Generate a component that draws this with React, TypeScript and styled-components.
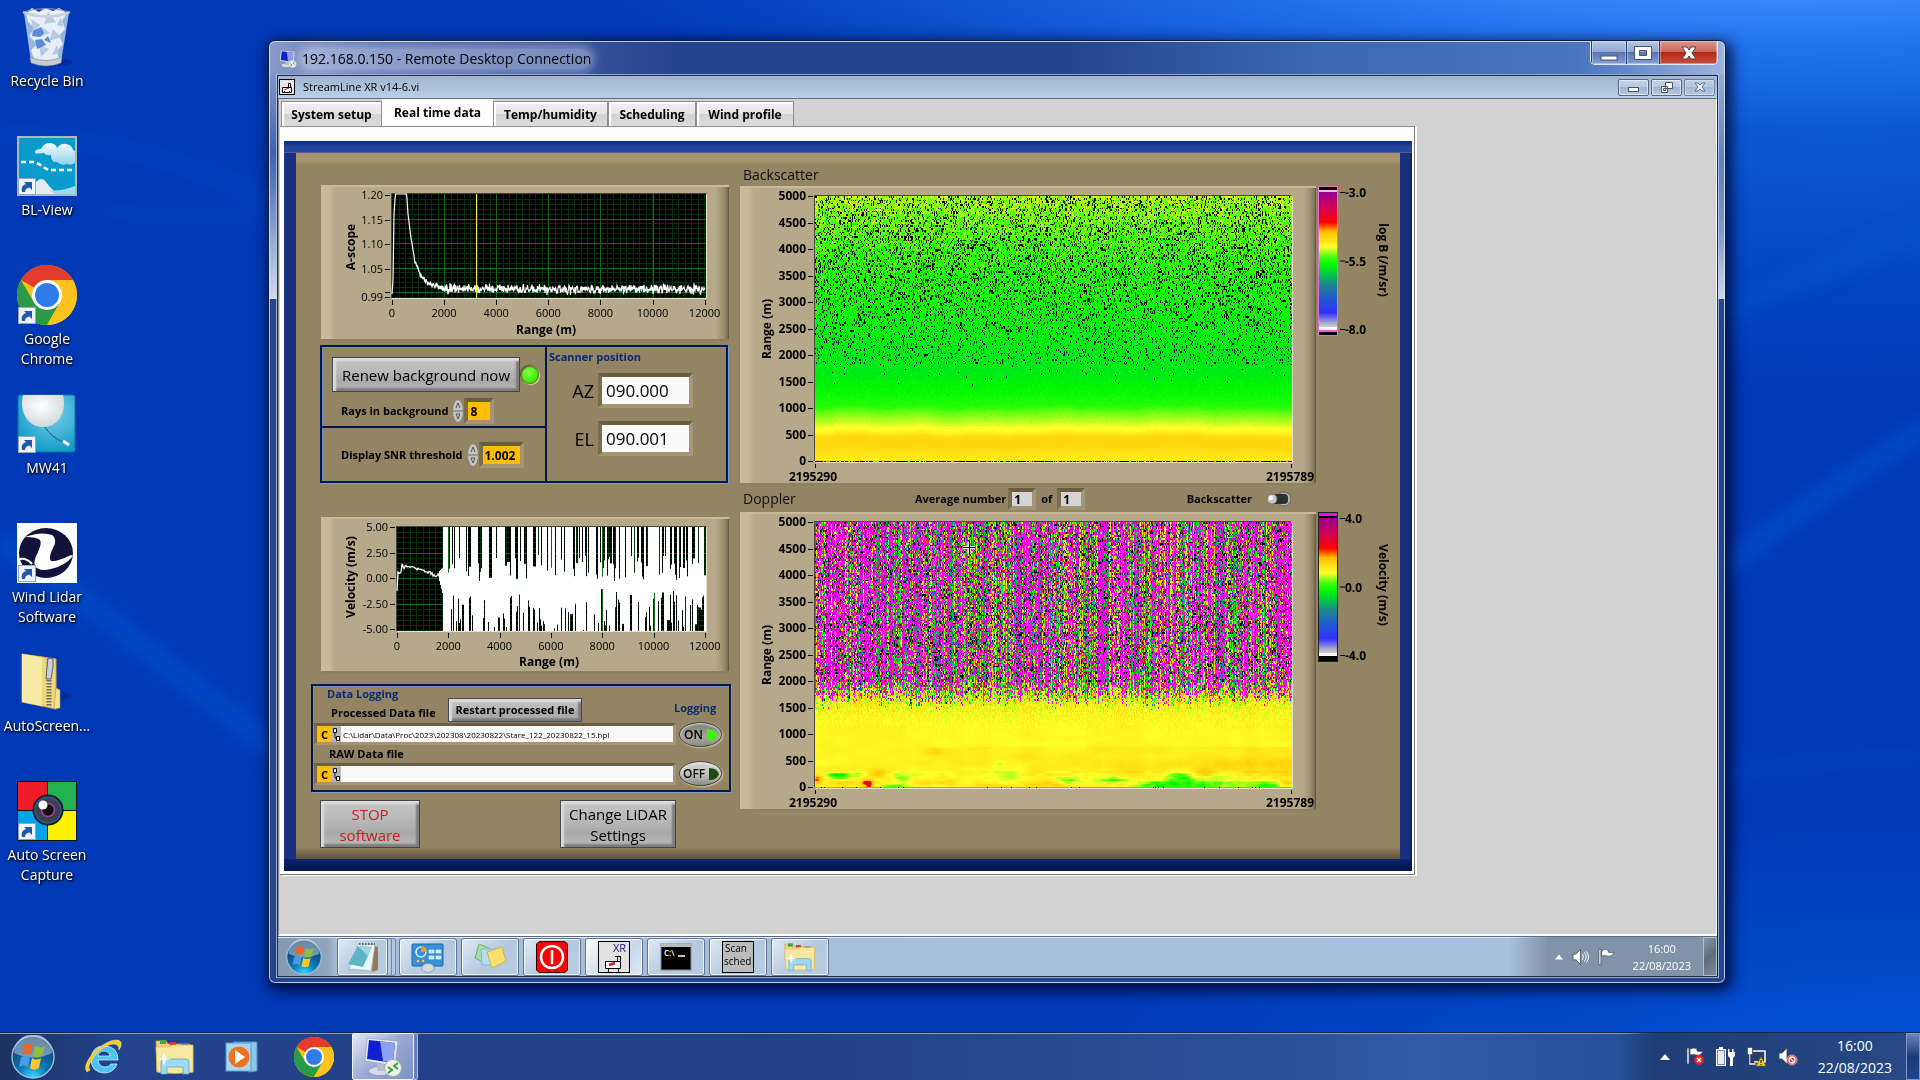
import React, { useEffect, useRef } from "react";
import styled, { createGlobalStyle, css } from "styled-components";

const GlobalStyle = createGlobalStyle`
  *, *::before, *::after { box-sizing: border-box; }
  html, body, #root { height: 100%; }
  body { margin: 0; overflow: hidden; font-family: "Open Sans", "Noto Sans", sans-serif; background: #0039b6; }
  button, input { font: inherit; color: inherit; margin: 0; padding: 0; border: 0; border-radius: 0; }
  button { background: none; cursor: default; }
  svg, canvas { display: block; }
`;

/* ---------- helpers ---------- */

function makeRandom(seed: number) {
  let s = seed >>> 0;
  return () => {
    s = (s + 0x6d2b79f5) >>> 0;
    let t = s;
    t = Math.imul(t ^ (t >>> 15), t | 1);
    t ^= t + Math.imul(t ^ (t >>> 7), t | 61);
    return ((t ^ (t >>> 14)) >>> 0) / 4294967296;
  };
}

type Rgb = [number, number, number];

const STOPS: [number, Rgb][] = [
  [0, [225, 225, 230]],
  [0.03, [190, 190, 200]],
  [0.12, [48, 48, 255]],
  [0.2, [35, 80, 220]],
  [0.32, [30, 130, 150]],
  [0.4, [0, 200, 70]],
  [0.47, [0, 250, 0]],
  [0.52, [60, 255, 10]],
  [0.6, [255, 255, 40]],
  [0.71, [255, 190, 0]],
  [0.78, [255, 0, 0]],
  [0.88, [215, 0, 80]],
  [1, [150, 0, 150]],
];

function ramp(v: number): Rgb {
  if (v <= 0) return [0, 0, 0];
  if (v >= 1) return [245, 0, 235];
  for (let i = 1; i < STOPS.length; i++) {
    if (v <= STOPS[i][0]) {
      const [a, ca] = STOPS[i - 1];
      const [b, cb] = STOPS[i];
      const t = (v - a) / (b - a);
      return [0, 1, 2].map((k) => ca[k] + (cb[k] - ca[k]) * t) as Rgb;
    }
  }
  return [150, 0, 150];
}

function interp(points: [number, number][], x: number) {
  for (let i = 1; i < points.length; i++) {
    if (x <= points[i][0]) {
      const [a, va] = points[i - 1];
      const [b, vb] = points[i];
      return va + ((x - a) / (b - a)) * (vb - va);
    }
  }
  return points[points.length - 1][1];
}

function smoothNoise(seed: number, sx: number, sy: number) {
  const r = makeRandom(seed);
  const g = Array.from({ length: 64 * 64 }, () => r() * 2 - 1);
  return (x: number, y: number) => {
    const fx = x / sx;
    const fy = y / sy;
    const ix = Math.floor(fx);
    const iy = Math.floor(fy);
    const u = (fx - ix) * (fx - ix) * (3 - 2 * (fx - ix));
    const w = (fy - iy) * (fy - iy) * (3 - 2 * (fy - iy));
    const at = (a: number, b: number) => g[(b & 63) * 64 + (a & 63)];
    return (
      (at(ix, iy) * (1 - u) + at(ix + 1, iy) * u) * (1 - w) +
      (at(ix, iy + 1) * (1 - u) + at(ix + 1, iy + 1) * u) * w
    );
  };
}

/* ---------- heat maps ---------- */

const MAP_W = 477;
const MAP_H = 266;

type Sampler = (x: number, metres: number, py: number) => number;

function backscatterField(): Sampler {
  const r = makeRandom(7);
  const wave = smoothNoise(3, 34, 400);
  const fine = smoothNoise(5, 12, 400);
  const profile: [number, number][] = [
    [0, 0.63], [150, 0.645], [300, 0.668], [470, 0.667], [520, 0.645], [580, 0.615],
    [660, 0.598], [730, 0.58], [850, 0.555], [980, 0.53], [1060, 0.5], [1300, 0.478],
    [1500, 0.462], [1700, 0.448], [2000, 0.446], [2600, 0.466], [3200, 0.487],
    [4000, 0.51], [4400, 0.53], [5000, 0.562],
  ];
  const noise: [number, number][] = [[0, 0.002], [1000, 0.005], [1500, 0.013], [2500, 0.028], [4000, 0.042], [5000, 0.042]];
  const drop: [number, number][] = [[0, 0], [1400, 0], [1500, 0.004], [1830, 0.015], [1850, 0.09], [2400, 0.13], [3000, 0.2], [4000, 0.22], [5000, 0.17]];
  return (x, m) => {
    if (m < 12) return r() < 0.7 ? 0 : 0.5;
    if (r() < interp(drop, m)) return 0;
    const shift = m < 1100 ? wave(x, 0) * 28 + fine(x, 0) * 12 : 0;
    return interp(profile, Math.max(0, m + shift)) + (r() - 0.5) * 2 * interp(noise, m);
  };
}

const BLOBS: [number, number, number, number, number][] = [
  [23, 253, 11, 3, -0.15], [42, 252, 10, 3, -0.06], [52, 261, 5, 4, 0.22], [2, 256, 4, 4, 0.13],
  [62, 250, 9, 4, 0.06], [88, 254, 9, 6, -0.05], [80, 264, 13, 2, -0.14], [122, 259, 20, 3, 0.05],
  [118, 229, 13, 4, 0.04], [190, 252, 16, 5, -0.035], [206, 246, 7, 4, -0.04], [184, 241, 5, 3, -0.03],
  [180, 263, 26, 2, 0.04], [232, 262, 22, 3, 0.06], [254, 258, 12, 4, -0.08], [302, 257, 18, 3, -0.08],
  [352, 262, 30, 4, -0.12], [366, 254, 13, 5, -0.11], [392, 261, 24, 4, -0.08], [410, 254, 14, 3, -0.05],
  [446, 262, 28, 4, -0.1], [388, 250, 8, 3, 0.08], [472, 261, 7, 3, 0.1], [440, 242, 70, 10, 0.035],
  [300, 242, 80, 9, 0.022], [170, 234, 60, 12, 0.015], [30, 260, 20, 3, 0.05],
];

function dopplerField(): Sampler {
  const r = makeRandom(21);
  const c = makeRandom(4);
  const cols = Array.from({ length: MAP_W }, () => ({ hot: c(), edge: c(), tint: c(), mean: 0.36 + c() * 0.3 }));
  const band = smoothNoise(8, 14, 500);
  const cloud = smoothNoise(12, 26, 6);
  const fine = smoothNoise(14, 9, 3);
  return (x, m, py) => {
    if (m < 12) return r() < 0.04 ? 0 : 0.5;
    const col = cols[x];
    const edge = 1640 + col.edge * 220 + band(x, 0) * 60;
    const chaos = Math.min(1, Math.max(0, (m - edge + 160) / 360));
    if (r() < chaos) {
      const hot = (m > 2000 ? 0.42 : 0.34) + (col.hot - 0.5) * 1.05 + band(x, 3) * 0.2;
      const dark = m > 2000 ? 0.14 : 0.04;
      if (r() < dark) return 0;
      if (r() < hot) return 1.1;
      const p = r();
      if (p < 0.12) return 0.78 + r() * 0.21;
      if (p < 0.72) return col.mean + (r() - 0.5) * 0.16;
      if (p < 0.84) return 1.1;
      return 0.05 + r() * 0.7;
    }
    let v = 0.615 + band(x, 0) * 0.008 + cloud(x, py) * (m < 900 ? 0.015 : 0.006);
    const spread = m > 800 ? Math.min(0.08, ((m - 800) / 1000) ** 2 * 0.09) : 0.003;
    v += (r() - 0.5) * 2 * spread + (col.tint - 0.55) * spread;
    if (m < 320) v += fine(x, py) * 0.02;
    if (m < 800) {
      for (const [bx, by, rx, ry, d] of BLOBS) {
        const q = ((x - bx) / rx) ** 2 + ((py - by) / ry) ** 2;
        if (q < 5) v += d * Math.exp(-q) * (1 + fine(x * 2, py * 2) * 0.35);
      }
      v += (x / MAP_W) * 0.02 * (m / 800);
    }
    return v;
  };
}

const Plot = styled.canvas`
  width: 477px;
  height: 266px;
  box-shadow: -1px -1px 0 #4d4a3a, 1px 1px 0 #e6e4c8;
`;

function HeatCanvas({ field, label }: { field: () => Sampler; label: string }) {
  const ref = useRef<HTMLCanvasElement>(null);
  useEffect(() => {
    const ctx = ref.current?.getContext("2d");
    if (!ctx) return;
    const img = ctx.createImageData(MAP_W, MAP_H);
    const f = field();
    const gates = 167;
    let lastGate = -1;
    let row: Rgb[] = [];
    for (let y = 0; y < MAP_H; y++) {
      const gate = Math.floor((y / MAP_H) * gates);
      if (gate !== lastGate || y === MAP_H - 1) {
        const m = y === MAP_H - 1 ? 0 : 5000 - (y / (MAP_H - 1)) * 5000 + 12;
        row = Array.from({ length: MAP_W }, (_, x) => ramp(f(x, m, y)));
        lastGate = gate;
      }
      for (let x = 0; x < MAP_W; x++) {
        const o = (y * MAP_W + x) * 4;
        img.data[o] = row[x][0];
        img.data[o + 1] = row[x][1];
        img.data[o + 2] = row[x][2];
        img.data[o + 3] = 255;
      }
    }
    ctx.putImageData(img, 0, 0);
  }, [field]);
  return <Plot ref={ref} width={MAP_W} height={MAP_H} role="img" aria-label={label} />;
}

const bevel = css`
  background:
    linear-gradient(90deg, #c9bd9d, #c6b998 9px, rgba(198, 185, 152, 0) 14px),
    linear-gradient(270deg, #5b5340 0, #85795c 2px, #9c9070 6px, rgba(156, 144, 112, 0) 13px),
    #b6a98b;
  border-top: 2px solid #c8bb99;
  border-bottom: 2px solid #8d8060;
`;

const HeatPanel = styled.div`
  ${bevel}
  display: grid;
  grid-template-columns: 34px 41px 477px 24px;
  grid-template-rows: 8px 266px 21px;
  width: 576px;
  height: 299px;
`;

const AxisTitle = styled.span`
  grid-row: 2;
  grid-column: 1;
  writing-mode: vertical-rl;
  transform: rotate(180deg);
  place-self: center end;
  font-size: 12px;
  line-height: 14px;
  font-weight: 700;
  color: #000;
`;

const AxisSvg = styled.svg`
  grid-row: 1 / 3;
  grid-column: 2;
  overflow: visible;
`;

const PlotCell = styled.div`
  grid-row: 2;
  grid-column: 3;
  display: grid;
  > * {
    grid-area: 1 / 1;
  }
`;

const Feet = styled.div`
  grid-row: 3;
  grid-column: 1 / 5;
  display: flex;
  justify-content: space-between;
  align-items: flex-end;
  padding: 0 2px 0 49px;
  font-size: 12px;
  line-height: 12px;
  font-weight: 700;
  background: linear-gradient(#000, #000) 75px 2px / 1px 4px no-repeat, linear-gradient(#000, #000) 551px 2px / 1px 4px no-repeat;
`;

function HeatChart({ field, label, cursor }: { field: () => Sampler; label: string; cursor?: boolean }) {
  return (
    <HeatPanel>
      <AxisTitle>Range (m)</AxisTitle>
      <AxisSvg width="41" height="274">
        {Array.from({ length: 11 }, (_, i) => {
          const y = 8 + i * 26.5;
          return (
            <g key={i}>
              <text x="32" y={y + 4} textAnchor="end" fontSize="12" fontWeight="700">{5000 - i * 500}</text>
              <path d={`M34 ${Math.round(y) + 0.5}h5`} stroke="#000" />
            </g>
          );
        })}
      </AxisSvg>
      <PlotCell>
        <HeatCanvas field={field} label={label} />
        {cursor && (
          <svg width="477" height="266">
            <path d="M148 25.500h12M154 19.500v12" stroke="#fff" strokeWidth="3" />
            <path d="M148 25.500h12M154.500 19v13" stroke="#000" strokeWidth="1" />
          </svg>
        )}
      </PlotCell>
      <Feet><span>2195290</span><span>2195789</span></Feet>
    </HeatPanel>
  );
}

const ScaleSvg = styled.svg`
  overflow: visible;
`;

function ColourScale({ title, id, marks, over, under, frame, titleY }: {
  title: string; id: string; marks: string[]; over: string; under: string; frame: string; titleY: number;
}) {
  return (
    <ScaleSvg width="80" height="152" viewBox="0 0 80 152" fontSize="12" fontWeight="700">
      <defs>
        <linearGradient id={id} x1="0" y1="0" x2="0" y2="1">
          {[...STOPS].reverse().map(([p, c]) => (
            <stop key={p} offset={1 - p} stopColor={`rgb(${c.join(",")})`} />
          ))}
        </linearGradient>
      </defs>
      <rect x="0.5" y="0.5" width="19" height="149" fill={under} stroke={frame} />
      <rect x="1" y="1" width="18" height="3" fill={over} />
      <rect x="1" y="4" width="18" height="2" fill={over === "#000" ? "#f2b6ee" : "#000"} />
      <rect x="1" y="6" width="18" height="137" fill={`url(#${id})`} />
      <rect x="1" y="141" width="18" height="3" fill="#fff" />
      {over === "#000" && <rect x="1" y="144" width="18" height="2" fill="#e860d8" />}
      {marks.map((m, i) => (
        <g key={m}>
          <path d={`M22 ${6.5 + i * 68.5}h5`} stroke="#000" />
          <text x="27" y={11 + i * 68.5}>{m}</text>
        </g>
      ))}
      <text transform={`translate(61 ${titleY}) rotate(90)`} textAnchor="middle">{title}</text>
    </ScaleSvg>
  );
}

/* ---------- line plots ---------- */

const LinePanel = styled.div`
  ${bevel}
  width: 408px;
  height: 156px;
  margin-left: 10px;
`;

function Grid({ x, y, w, h, dx, dy, majorX, majorY }: {
  x: number; y: number; w: number; h: number; dx: number; dy: number; majorX: number; majorY: number[];
}) {
  const minor: string[] = [];
  for (let gx = dx; gx < w; gx += dx) minor.push(`M${Math.round(x + gx) + 0.5} ${y}v${h}`);
  for (let gy = dy; gy < h; gy += dy) minor.push(`M${x} ${Math.round(y + gy) + 0.5}h${w}`);
  const major: string[] = [];
  for (let i = 1; i < 6; i++) major.push(`M${Math.round(x + i * majorX) + 0.5} ${y}v${h}`);
  majorY.forEach((gy) => major.push(`M${x} ${Math.round(y + gy) + 0.5}h${w}`));
  return (
    <g>
      <rect x={x} y={y} width={w} height={h} fill="#000" />
      <path d={minor.join("")} stroke="#04300a" strokeWidth="1" />
      <path d={major.join("")} stroke="#126a18" strokeWidth="1" />
      <path d={`M${x - 0.5} ${y + h}v${-h - 0.5}h${w + 1}`} stroke="#4a4636" fill="none" />
      <path d={`M${x} ${y + h + 0.5}h${w + 0.5}v${-h}`} stroke="#e8e2ce" fill="none" />
    </g>
  );
}

function XTicks({ x, step, y }: { x: number; step: number; y: number }) {
  return (
    <g>
      {[0, 1, 2, 3, 4, 5, 6].map((i) => (
        <g key={i}>
          <path d={`M${Math.round(x + i * step) + 0.5} ${y}v5`} stroke="#000" />
          <text x={x + i * step} y={y + 17} textAnchor="middle">{i * 2000}</text>
        </g>
      ))}
    </g>
  );
}

function ScopeChart() {
  const r = makeRandom(31);
  const pts: string[] = [];
  for (let i = 0; i <= 626; i++) {
    const px = i / 2;
    const decay = interp([
      [0, 100], [1, 86], [2, 20], [4, -10], [14, -10], [16, 20], [19, 44], [23, 68], [29, 82], [34, 88], [42, 92], [50, 95], [314, 95],
    ], px);
    const amp = px < 20 ? 0 : px < 42 ? 3 : 6;
    const jitter = (r() + r() - 1) * amp;
    pts.push(`${71 + px} ${Math.max(7, Math.min(110, 7 + decay + jitter))}`);
  }
  const labels: [string, number][] = [["1.20", 8], ["1.15", 33], ["1.10", 57], ["1.05", 82], ["0.99", 110]];
  return (
    <LinePanel>
      <svg width="408" height="152" fontSize="11" role="img" aria-label="A-scope">
        <Grid x={71} y={7} w={314} h={104} dx={6.5} dy={4.9} majorX={52.1} majorY={[25, 49, 74, 98]} />
        <path d={`M${pts.join("L")}`} fill="none" stroke="#fff" strokeWidth="1.2" />
        <path d="M155.5 7v104" stroke="#f4f43c" />
        {labels.map(([t, y]) => (
          <g key={t}>
            <text x="62" y={y + 4} textAnchor="end">{t}</text>
            <path d={`M64 ${y + 0.5}h5`} stroke="#000" />
          </g>
        ))}
        <path d="M64 105.5h5" stroke="#000" />
        <XTicks x={71} step={52.1} y={113} />
        <text x="225" y="147" textAnchor="middle" fontWeight="700" fontSize="12">Range (m)</text>
        <text transform="translate(34 60) rotate(-90)" textAnchor="middle" fontWeight="700" fontSize="12">A-scope</text>
      </svg>
    </LinePanel>
  );
}

function VelocityChart() {
  const r = makeRandom(77);
  const x0 = 76;
  const y0 = 8;
  const line: string[] = [];
  for (let i = 0; i <= 46; i++) {
    const v = interp([[0, 64], [1, 46], [4, 46], [5, 36], [7, 41], [9, 39], [14, 40], [30, 45], [46, 52]], i);
    line.push(`${x0 + i} ${y0 + v + (r() - 0.5) * (i > 28 ? 7 : 2)}`);
  }
  const bars: string[] = [];
  let top = 0;
  let bottom = 104;
  for (let i = 42; i < 309; i++) {
    if (r() < 0.9) top = r() < 0.62 ? 0 : 28 + r() * 26;
    if (r() < 0.9) bottom = r() < 0.62 ? 104 : 62 + r() * 42;
    const t = i < 46 ? 44 - (i - 42) : top;
    const b = i < 46 ? 54 + (i - 42) * 4 : bottom;
    bars.push(`M${x0 + i + 0.5} ${y0 + t}V${y0 + b}`);
  }
  return (
    <LinePanel>
      <svg width="408" height="152" fontSize="11" role="img" aria-label="Velocity">
        <Grid x={x0} y={y0} w={309} h={104} dx={6.4} dy={5.15} majorX={51.3} majorY={[26, 51, 77]} />
        <path d={bars.join("")} stroke="#fff" strokeWidth="1" />
        <path d={`M${line.join("L")}`} fill="none" stroke="#fff" strokeWidth="1.3" />
        {["5.00", "2.50", "0.00", "-2.50", "-5.00"].map((t, i) => (
          <g key={t}>
            <text x="67" y={12 + i * 25.6} textAnchor="end">{t}</text>
            <path d={`M69 ${Math.round(8 + i * 25.6) + 0.5}h5`} stroke="#000" />
          </g>
        ))}
        <XTicks x={x0} step={51.3} y={114} />
        <text x="228" y="147" textAnchor="middle" fontWeight="700" fontSize="12">Range (m)</text>
        <text transform="translate(34 58) rotate(-90)" textAnchor="middle" fontWeight="700" fontSize="12">Velocity (m/s)</text>
      </svg>
    </LinePanel>
  );
}

/* ---------- icons ---------- */

const Shortcut = () => (
  <g transform="translate(1 42)">
    <rect x="0.5" y="0.5" width="17" height="16" fill="#eef3fa" stroke="#9aa6b8" />
    <path d="M4 14c-1-5 1-7 4-8L6 4h8v8l-2.500-2.500C9 10 7 11 7 14z" fill="#2457a5" />
  </g>
);

const BinIcon = () => (
  <svg width="60" height="60" viewBox="0 0 60 60">
    <ellipse cx="36" cy="55" rx="20" ry="4" fill="#001f80" opacity=".5" />
    <path d="M7 6l7 49q16 7 30 0l8-49z" fill="#a9c4e4" opacity=".9" />
    <path d="M9 6l6-5 7 4 6-4 8 3 6-3 8 5-5 8 3 8-6 7 4 8-6 7 2 8q-14 4-25 0l-3-9 6-6-8-8 6-8-7-6z" fill="#e6eef8" />
    <path d="M14 12l9 6-6 8zM31 5l8 10-12 2zM36 22l8 8-12 4zM22 38l10 4-8 8zM40 38l-5 10 7-2zM25 20l8 6-10 4zM44 10l-4 8 6 2z" fill="#b5c9e2" />
    <path d="M16 24l8-4 3 6-4 4-8-1zM18 33l7-1 4 6-9 4zM27 33l4-4 3 7z" fill="#3f7bd3" opacity=".85" />
    <path d="M6 5q24 9 47 0" fill="none" stroke="#c9d0da" strokeWidth="2.500" />
    <path d="M6 5q23-7 47 0" fill="none" stroke="#8d98a8" strokeWidth="1" />
    <path d="M13 50q16 7 32 0l-1 6q-15 6-30 0z" fill="#c7ccd4" stroke="#777f8b" strokeWidth=".6" />
  </svg>
);

const BlViewIcon = () => (
  <svg width="60" height="60" viewBox="0 0 60 60">
    <defs>
      <linearGradient id="cloud" x1="0" y1="0" x2="0" y2="1">
        <stop offset="0" stopColor="#f2fafc" />
        <stop offset="1" stopColor="#8ed3e8" />
      </linearGradient>
    </defs>
    <rect width="60" height="60" fill="#a9b9c4" />
    <rect x="2" y="2" width="56" height="56" fill="#089bcb" />
    <path d="M18 18q-1-5 6-5 3-7 10-6 5 1 6 5 4-5 9-4 6 1 7 6l2 1v12q-4 3-8 1-6 2-10-2-6 1-6-7-5 1-7-2-8 1-9 0z" fill="url(#cloud)" />
    <path d="M4 26h12q6 1 10 5l6 3h26" fill="none" stroke="#fff" strokeWidth="2.600" strokeDasharray="5 3" />
    <path d="M19 58V46q6-6 10 0 6 9 14 12z" fill="#e5eaec" />
    <path d="M32 54q10 2 26-4v8H38z" fill="#9bdcf0" />
    <Shortcut />
  </svg>
);

const ChromeIcon = ({ size = 60, shortcut }: { size?: number; shortcut?: boolean }) => (
  <svg width={size} height={size} viewBox="0 0 60 60">
    <circle cx="30" cy="30" r="30" fill="#fbc116" />
    <path d="M30 30L4 15A30 30 0 0 1 56 15H30z" fill="#e33b2e" />
    <path d="M4 15A30 30 0 0 0 30 60L43 37.500 17 37.500z" fill="#2a9a48" />
    <path d="M30 15H56A30 30 0 0 1 30 60L43 37.500A15 15 0 0 0 30 15z" fill="#fcc31e" />
    <circle cx="30" cy="30" r="15" fill="#fff" />
    <circle cx="30" cy="30" r="12" fill="#2f7bea" />
    {shortcut && <Shortcut />}
  </svg>
);

const BalloonIcon = () => (
  <svg width="60" height="60" viewBox="0 0 60 60">
    <defs>
      <radialGradient id="sky" cx=".6" cy=".3" r=".8">
        <stop offset="0" stopColor="#7fd0e8" />
        <stop offset="1" stopColor="#0596c6" />
      </radialGradient>
      <radialGradient id="ball" cx=".45" cy=".35" r=".7">
        <stop offset="0" stopColor="#fff" />
        <stop offset="1" stopColor="#cdd4d8" />
      </radialGradient>
    </defs>
    <rect x="1" y="1" width="57" height="57" rx="2" fill="url(#sky)" stroke="#07749c" />
    <path d="M6 1h40c4 16-4 32-20 32S2 17 6 1z" fill="url(#ball)" />
    <path d="M28 33q6 10 18 15" fill="none" stroke="#24566a" strokeWidth="1" />
    <path d="M46 47l6 4" stroke="#fff" strokeWidth="3" />
    <Shortcut />
  </svg>
);

const WindLidarIcon = () => (
  <svg width="60" height="60" viewBox="0 0 60 60">
    <rect width="60" height="60" fill="#fff" />
    <ellipse cx="29" cy="30" rx="27" ry="25" fill="#12123a" />
    <path d="M8 14q16-6 27-2 6 4 1 13-5 10-2 13 6 1 20-6l2 1q-8 10-22 13-12 3-16-3-2-5 3-14 4-9 2-12-3-3-15-3z" fill="#fff" />
    <path d="M3 36q7-1 12 5" stroke="#fff" strokeWidth="2" fill="none" />
    <Shortcut />
  </svg>
);

const ZipIcon = () => (
  <svg width="60" height="60" viewBox="0 0 60 60">
    <path d="M40 52l16-8-14-6z" fill="#002a8c" opacity=".5" />
    <path d="M5 2l34 5v50L5 50z" fill="#efd77a" stroke="#c7a648" />
    <path d="M5 2l20 3v49L5 50z" fill="#f8e9a6" />
    <path d="M39 36l4 2v18l-6 1z" fill="#f3e39c" stroke="#b99a3e" strokeWidth=".6" />
    <path d="M32 7v48" stroke="#6a6f78" strokeWidth="5" strokeDasharray="1.500 1.500" />
    <path d="M31 6l5 1v8l-2 12h-5l1-12z" fill="#c9ced6" stroke="#5d6570" />
  </svg>
);

const CaptureIcon = () => (
  <svg width="60" height="60" viewBox="0 0 60 60">
    <rect width="60" height="60" fill="#111" />
    <rect x="1" y="1" width="29" height="28" fill="#ee1c25" />
    <rect x="31" y="1" width="28" height="28" fill="#22b14c" />
    <rect x="1" y="30" width="29" height="29" fill="#00a2e8" />
    <rect x="31" y="30" width="28" height="29" fill="#fff200" />
    <circle cx="31" cy="29" r="15.500" fill="#16181e" />
    <circle cx="31" cy="29" r="13" fill="#3c4148" stroke="#2a5aa0" strokeWidth="1.500" />
    <circle cx="31" cy="29" r="6.500" fill="#111" stroke="#a040b0" strokeWidth="1.500" />
    <circle cx="26" cy="24" r="4.500" fill="#fff" />
    <Shortcut />
  </svg>
);

const OrbIcon = ({ size, id }: { size: number; id: string }) => (
  <svg width={size} height={size} viewBox="0 0 44 44">
    <defs>
      <radialGradient id={id} cx=".5" cy="1" r=".9">
        <stop offset="0" stopColor="#35e0ff" />
        <stop offset=".4" stopColor="#0a78b8" />
        <stop offset="1" stopColor="#123a66" />
      </radialGradient>
    </defs>
    <circle cx="22" cy="22" r="21" fill={`url(#${id})`} stroke="#9fbcd8" strokeWidth="1.400" />
    <path d="M3 18a19 19 0 0 1 38 0q-19 9-38 0z" fill="#dcebf5" opacity=".45" />
    <path d="M13 10q5-3 9 0l-2 10q-4-3-9 0z" fill="#e9662a" />
    <path d="M24 11q5 3 10 0l-3 10q-5 3-9 0z" fill="#90bf3b" />
    <path d="M10 22q5-3 9 0l-2 10q-4-3-9 0z" fill="#4a9be0" />
    <path d="M21 23q4 3 9 0l-2 10q-5 3-9 0z" fill="#fcc52e" />
  </svg>
);

const IeIcon = () => (
  <svg width="40" height="38" viewBox="0 0 40 38">
    <path d="M34 22H14q1 7 7 7 4 0 6-3h6q-3 9-13 9Q7 34 7 21 8 8 20 8q14 0 14 14zM14 18h12q-1-5-6-5t-6 5z" fill="#4cc4f4" stroke="#cdeefc" strokeWidth=".8" />
    <path d="M3 34Q-2 28 10 14 24 1 34 2q6 2 1 10 0-6-5-6-8 0-17 9Q2 28 6 32z" fill="#f7c92c" stroke="#fff0a0" strokeWidth=".5" />
  </svg>
);

const FolderIcon = ({ w = 40, h = 38 }: { w?: number; h?: number }) => (
  <svg width={w} height={h} viewBox="0 0 40 38">
    <path d="M1 3h10l2 3h20l5 2v26H2z" fill="#efd27a" stroke="#c9a545" strokeWidth=".8" />
    <path d="M5 2h6v4H5z" fill="#3da24a" />
    <path d="M15 4h6v3h-6z" fill="#c8412d" />
    <path d="M26 6h7v3h-7z" fill="#3b82cf" />
    <path d="M1 9h14l3-2h20v27q-18 3-36 0z" fill="#f8e7a0" stroke="#d4b558" strokeWidth=".6" />
    <path d="M6 36V24q0-3 3-3h22q3 0 3 3v12h-6v-7H12v7z" fill="#9fd8f0" stroke="#5aa9d0" strokeWidth=".8" />
    <path d="M9 14l2 6 6 1-6 1-2 6-2-6-5-1 5-1z" fill="#fff" opacity=".8" />
  </svg>
);

const PlayerIcon = () => (
  <svg width="34" height="34" viewBox="0 0 34 34">
    <path d="M8 2h24v29l-8 1z" fill="#8cc8e8" stroke="#4a93c4" />
    <rect x="1" y="3" width="25" height="28" fill="#a9d6ee" stroke="#5d9cc8" />
    <circle cx="14" cy="17" r="10.500" fill="#f0701e" />
    <path d="M10 10l10 7-10 7z" fill="#fff" />
  </svg>
);

const RdpIcon = ({ size = 40 }: { size?: number }) => (
  <svg width={size} height={size} viewBox="0 0 40 40">
    <ellipse cx="17" cy="34" rx="11" ry="4" fill="#d8dce4" />
    <path d="M14 26h7v8h-7z" fill="#b7bdc9" />
    <path d="M4 1l31 3-3 25L2 24z" fill="#e4e8f0" stroke="#8d97a8" strokeWidth=".6" />
    <path d="M6 3l26 3-2 20L4 22z" fill="#1020d0" />
    <path d="M17 4l15 2-2 20-10-2z" fill="#8ea0ee" />
    <circle cx="30" cy="31" r="8.500" fill="#eef1ea" stroke="#a9b0a4" />
    <path d="M25 30l4 3-4 3M35 26l-4 3 4 3" fill="none" stroke="#3aa03a" strokeWidth="2" />
  </svg>
);

const NotepadIcon = () => (
  <svg width="32" height="32" viewBox="0 0 32 32">
    <path d="M27 5l4 1v23l-6 2z" fill="#9c7a50" />
    <path d="M11 3l17 1-4 26-22-2z" fill="#eef6fa" stroke="#8aa" strokeWidth=".6" />
    <path d="M11 5l14 1-9 20-15-3z" fill="#5fb4c6" />
    <path d="M11 5l14 1-4 9z" fill="#9fd8e2" />
    <path d="M12 3h16" stroke="#666" strokeWidth="2" strokeDasharray="1.500 1.500" />
  </svg>
);

const ControlIcon = () => (
  <svg width="34" height="32" viewBox="0 0 34 32">
    <rect x="1" y="3" width="31" height="22" rx="1" fill="#3690d8" stroke="#1e66a8" />
    <circle cx="10" cy="11" r="5" fill="none" stroke="#d5ecfa" strokeWidth="1.500" />
    <path d="M10 11V5a6 6 0 0 1 6 6z" fill="#f79a20" />
    <path d="M18 9h5v3h-5zM25 9h5v3h-5zM18 15h5v3h-5zM25 15h5v3h-5z" fill="#bfe6fb" stroke="#fff" strokeWidth=".6" />
    <circle cx="7" cy="20" r="1.300" fill="#f7c560" />
    <circle cx="12" cy="20" r="1.300" fill="#f7c560" />
    <ellipse cx="17" cy="27" rx="6" ry="4.500" fill="#d5d9de" stroke="#8a9098" strokeWidth=".6" />
  </svg>
);

const NotesIcon = () => (
  <svg width="34" height="32" viewBox="0 0 34 32">
    <path d="M6 3l12 5-6 14L2 17z" fill="#a6dfa0" stroke="#6cb86a" />
    <path d="M8 8h15v16H9z" fill="#b6dcf4" stroke="#84b6dc" />
    <path d="M14 11l15-5 4 14-14 7z" fill="#f8e070" stroke="#d8b23c" />
  </svg>
);

const PowerIcon = () => (
  <svg width="32" height="32" viewBox="0 0 32 32">
    <path d="M3 .5h26L31.500 3v26L29 31.500H3L.5 29V3z" fill="#f40606" stroke="#300" />
    <circle cx="16" cy="16" r="11" fill="none" stroke="#fff" strokeWidth="2.500" />
    <path d="M16 9v14" stroke="#fff" strokeWidth="2.500" />
  </svg>
);

const XrIcon = () => (
  <svg width="32" height="32" viewBox="0 0 32 32">
    <rect x=".5" y=".5" width="31" height="31" fill="#e2e2e2" stroke="#000" />
    <text x="15" y="11" fontSize="11" fill="#14148c">XR</text>
    <path d="M7.500 20.500h15v7h-15zM10.500 31v-4M20.500 31v-4M19.500 20v-5M22.500 20v-5M17 15.500h5" fill="#fff" stroke="#000" />
    <path d="M11 24l6-2" stroke="#d01818" strokeWidth="2.500" />
  </svg>
);

const ConsoleIcon = () => (
  <svg width="32" height="28" viewBox="0 0 32 28">
    <rect x="1" y="1" width="30" height="26" fill="#000" stroke="#8a8a8a" />
    <rect x="1" y="1" width="30" height="3" fill="#b8bcc0" />
    <text x="4" y="13" fontSize="8" fontWeight="600" fill="#fff">C:\</text>
    <path d="M18 13h7" stroke="#fff" strokeWidth="1.500" />
  </svg>
);

const ScanIcon = () => (
  <svg width="32" height="32" viewBox="0 0 32 32">
    <rect x=".5" y=".5" width="31" height="31" fill="#bcbcbc" stroke="#000" />
    <text x="3" y="11" fontSize="10">Scan</text>
    <text x="2" y="24" fontSize="10">sched</text>
  </svg>
);

const ViIcon = () => (
  <svg width="16" height="16" viewBox="0 0 16 16">
    <rect x=".5" y=".5" width="15" height="15" fill="#e8e8e8" stroke="#000" />
    <path d="M3.500 8.500h9v5h-9zM9.500 8V4.500h2V8M5.500 14v-2M10.500 14v-2" fill="#fff" stroke="#000" />
    <path d="M5 11l5-2" stroke="#d01818" />
  </svg>
);

const SpeakerShape = () => <path d="M1 6h3l5-5v16l-5-5H1z" fill="#fff" stroke="#3b4656" strokeWidth=".8" />;

const FlagShape = () => (
  <path d="M1 1h2v16H1zM4 2q4-2 7 0v2q3 1 6 0-2 5-7 4-3-1-6 0z" fill="#fff" stroke="#3b4656" strokeWidth=".7" />
);

/* ---------- desktop ---------- */

const Desktop = styled.main`
  position: relative;
  height: 100vh;
  min-height: 720px;
  display: flex;
  flex-direction: column;
  overflow: hidden;
  background:
    radial-gradient(ellipse 62% 15% at 92% -3%, rgba(72, 150, 255, 1), rgba(40, 120, 245, 0.7) 50%, rgba(0, 80, 220, 0) 100%),
    radial-gradient(ellipse 46% 36% at 96% 0%, rgba(20, 110, 240, 0.85), rgba(0, 80, 220, 0) 100%),
    radial-gradient(ellipse 44% 24% at 100% 100%, rgba(4, 90, 225, 0.85), rgba(0, 80, 220, 0) 100%),
    #0039b6;
`;

const Rays = styled.svg`
  position: absolute;
  inset: 0;
  width: 100%;
  height: 100%;
`;

const IconColumn = styled.nav`
  position: relative;
  flex: 1;
  width: 94px;
  padding-top: 7px;
`;

const Shortcutter = styled.button`
  display: flex;
  flex-direction: column;
  align-items: center;
  justify-content: flex-start;
  gap: 4px;
  width: 94px;
  height: 129px;
  color: #fff;
  font-size: 14px;
  line-height: 20px;
  text-align: center;
  text-shadow: 1px 1px 2px #000, 0 1px 3px rgba(0, 0, 0, 0.8);
`;

const SHORTCUTS: [string, React.ReactNode][] = [
  ["Recycle Bin", <BinIcon />],
  ["BL-View", <BlViewIcon />],
  ["Google Chrome", <ChromeIcon shortcut />],
  ["MW41", <BalloonIcon />],
  ["Wind Lidar Software", <WindLidarIcon />],
  ["AutoScreen...", <ZipIcon />],
  ["Auto Screen Capture", <CaptureIcon />],
];

/* ---------- remote window ---------- */

const Window = styled.section`
  position: absolute;
  inset: 40px 194px 96px 268px;
  display: flex;
  flex-direction: column;
  padding: 0 7px 6px 8px;
  border: 1px solid #0b1c40;
  border-radius: 7px;
  background:
    linear-gradient(90deg, rgba(170, 184, 222, 0.75), rgba(120, 140, 196, 0.6) 8%, rgba(37, 67, 141, 0) 28%, rgba(37, 67, 141, 0) 55%, #3c68b2 72%, #4a76c0 90%, #9db3df) 0 0 / 100% 33px no-repeat,
    linear-gradient(#8094c8, #3f63b0 35%, #5a7cbd 50%, #d3daee) 0 33px / 8px 225px no-repeat,
    linear-gradient(#94abd9, #5f80bc 40%, #8098cc 70%, #ccd6ea) 100% 33px / 8px 225px no-repeat,
    #25448e;
  box-shadow: inset 0 0 0 1px rgba(225, 235, 255, 0.8), 3px 4px 14px 3px rgba(0, 0, 30, 0.75);
`;

const TitleBar = styled.header`
  flex: none;
  display: flex;
  justify-content: space-between;
  height: 34px;
`;

const TitleText = styled.h1`
  display: flex;
  align-items: center;
  gap: 5px;
  margin: 0;
  padding: 2px 0 0 2px;
  font-size: 14px;
  font-weight: 400;
  line-height: 20px;
  color: #000;
`;

const Glow = styled.span`
  background: rgba(235, 240, 255, 0.36);
  border-radius: 10px;
  box-shadow: 0 0 8px 4px rgba(235, 240, 255, 0.36);
`;

const Caption = styled.div`
  display: flex;
  height: 24px;
  border: 1px solid #dfe8f8;
  border-top: 0;
  border-radius: 0 0 5px 5px;
  overflow: hidden;
`;

const CaptionButton = styled.button<{ $w: number; $close?: boolean }>`
  display: grid;
  place-items: center;
  width: ${(p) => p.$w}px;
  border-left: 1px solid #2b3f6c;
  background: ${(p) =>
    p.$close
      ? "linear-gradient(#dc9a8e, #cc6455 48%, #b22a16 50%, #c8503c)"
      : "linear-gradient(#b8c8e6, #8fa6d2 48%, #5674b4 50%, #86a0d4)"};
  box-shadow: inset 0 0 0 1px rgba(255, 255, 255, 0.35);
`;

const Screen = styled.div`
  flex: 1;
  min-height: 0;
  display: flex;
  flex-direction: column;
  border: 1px solid #1e2b45;
  box-shadow: 0 0 0 1px rgba(200, 215, 240, 0.7);
  background: #d2d2d2;
`;

const InnerTitle = styled.header`
  flex: none;
  display: flex;
  align-items: center;
  height: 22px;
  padding: 0 2px 0 1px;
  background: linear-gradient(#9fb5cf, #b8d0ea);
`;

const InnerName = styled.h2`
  flex: 1;
  margin: 0 0 0 8px;
  font-size: 11px;
  font-weight: 400;
  line-height: 16px;
`;

const InnerButtons = styled.div`
  display: flex;
  gap: 2px;
`;

const InnerButton = styled.button<{ $faded?: boolean }>`
  display: grid;
  place-items: center;
  width: 31px;
  height: 17px;
  border: 1px solid #56677f;
  border-radius: 2px;
  background: linear-gradient(#c3d4e8, #b4c8de 48%, #9db4d0 50%, #b6cbe3);
  box-shadow: inset 0 0 0 1px rgba(255, 255, 255, 0.5);
  opacity: ${(p) => (p.$faded ? 0.75 : 1)};
`;

const Client = styled.div`
  flex: 1;
  min-height: 0;
  overflow: hidden;
  border-top: 1px solid #6d6d6d;
  border-right: 1px solid #fff;
  border-bottom: 2px solid #fff;
  border-left: 1px solid #8a8a8a;
  padding-left: 1px;
`;

const Tabs = styled.div`
  display: flex;
  align-items: flex-end;
  height: 27px;
  padding-left: 1px;
`;

const Tab = styled.button<{ $w: number; $active?: boolean }>`
  width: ${(p) => p.$w}px;
  height: 25px;
  padding-top: 1px;
  font-size: 12px;
  font-weight: 700;
  line-height: 16px;
  border: 1px solid #8e8e8e;
  border-bottom: 0;
  box-shadow: inset 2px 2px 0 #fff;
  background: linear-gradient(#efefef, #e6e6e6 50%, #d3d3d3 52%, #dcdcdc);
  ${(p) =>
    p.$active &&
    css`
      height: 27px;
      padding-top: 0;
      padding-bottom: 1px;
      background: #fff;
      border-color: #fff;
    `}
`;

const Pane = styled.div`
  width: fit-content;
  padding: 14px 2px 3px 4px;
  background: #fff;
  border-top: 1px solid #8e8e8e;
  border-right: 1px solid #777;
  border-bottom: 1px solid #777;
  box-shadow: 2px 1px 0 #fff;
`;

const BlueFrame = styled.div`
  padding: 12px;
  background:
    linear-gradient(#0a2c7c, #24439a 5px, #24439a 11px, #6b79a0 12px) 0 0 / 100% 12px no-repeat,
    linear-gradient(#0a2470, #031446) 0 100% / 100% 12px no-repeat,
    linear-gradient(90deg, #1c3a8e, #18307e 3px, #18307e calc(100% - 3px), #0a1c58);
`;

const Tan = styled.div`
  display: flex;
  align-items: flex-start;
  gap: 9px;
  width: 1104px;
  height: 706px;
  padding: 0 0 0 15px;
  background:
    linear-gradient(#a8936a, #ab9670 8px, #938463 12px) 0 0 / 100% 12px no-repeat,
    linear-gradient(#938463, #5d5138) 0 100% / 100% 12px no-repeat,
    #938463;
`;

const LeftColumn = styled.div`
  width: 420px;
  padding-top: 32px;
`;

const RightColumn = styled.div`
  padding-top: 9px;
`;

const ChartRow = styled.div`
  display: flex;
  align-items: flex-start;
  gap: 2px;
`;

const ChartHead = styled.div<{ $h: number }>`
  display: flex;
  align-items: center;
  width: 576px;
  height: ${(p) => p.$h}px;
  padding: 1px 0 0 3px;
`;

const ChartName = styled.h3`
  width: 80px;
  margin: 0;
  font-size: 14px;
  font-weight: 400;
  line-height: 20px;
  color: #111;
`;

const Label = styled.label<{ $blue?: boolean }>`
  display: block;
  font-size: 11px;
  font-weight: 700;
  line-height: 16px;
  white-space: nowrap;
  color: ${(p) => (p.$blue ? "#0b2a78" : "#000")};
`;

const sunken = css`
  border-style: solid;
  border-color: #6b5d3f #a39575 #a39575 #7a6c4c;
`;

const Field = styled.input<{ $w: number; $h: number; $tone: "white" | "amber" | "grey"; $size?: number; $weight?: number }>`
  ${sunken}
  border-width: 4px;
  width: ${(p) => p.$w}px;
  height: ${(p) => p.$h}px;
  padding-left: ${(p) => (p.$size ? 4 : 2)}px;
  font-size: ${(p) => p.$size ?? 12}px;
  font-weight: ${(p) => p.$weight ?? 700};
  background: ${(p) => ({ white: "#fafafa", amber: "#ffbf00", grey: "#d4d4d4" })[p.$tone]};
`;

const Average = styled.div`
  display: flex;
  align-items: center;
  gap: 2px;
  margin-left: 92px;
`;

const Between = styled(Label)`
  padding: 0 3px;
`;

const SwitchGroup = styled.div`
  display: flex;
  align-items: center;
  gap: 14px;
  margin-left: auto;
  padding-right: 25px;
`;

const BlueBox = styled.div<{ $w: number; $h: number }>`
  width: ${(p) => p.$w}px;
  height: ${(p) => p.$h}px;
  border: 2px solid #02194f;
  box-shadow: inset 1px 1px 0 #6f8cc4, 1px 1px 0 #7f97c4;
`;

const Settings = styled(BlueBox)`
  display: grid;
  grid-template-columns: 225px 1fr;
  grid-template-rows: 81px 1fr;
  margin: 4px 0 34px 9px;
`;

const Cell = styled.div`
  border-right: 2px solid #02194f;
  padding-left: 10px;
`;

const BackgroundCell = styled(Cell)`
  display: flex;
  flex-direction: column;
  gap: 6px;
  border-bottom: 2px solid #02194f;
  padding-top: 10px;
`;

const ThresholdCell = styled(Cell)`
  padding-top: 14px;
`;

const ScannerCell = styled.div`
  grid-row: 1 / 3;
  grid-column: 2;
  padding: 2px 0 0 2px;
`;

const ValueRow = styled.div`
  display: flex;
  align-items: center;
  gap: 4px;
  padding-left: 9px;
`;

const Inline = styled.div`
  display: flex;
  align-items: center;
`;

const Axis = styled.div`
  display: flex;
  align-items: center;
  justify-content: flex-end;
  gap: 4px;
  width: 144px;
  margin-top: 13px;
  font-size: 18px;
  line-height: 24px;
`;

const AxisFirst = styled(Axis)`
  margin-top: 8px;
`;

const SteelButton = styled.button<{ $w: number; $h: number; $size: number; $line?: number; $bold?: boolean; $red?: boolean }>`
  width: ${(p) => p.$w}px;
  height: ${(p) => p.$h}px;
  padding-top: 1px;
  font-size: ${(p) => p.$size}px;
  line-height: ${(p) => p.$line ?? 20}px;
  font-weight: ${(p) => (p.$bold ? 700 : 400)};
  color: ${(p) => (p.$red ? "#d01c1c" : "#000")};
  white-space: nowrap;
  border: 1px solid #45484c;
  background: linear-gradient(#c6c6c6, #b9b9b9 40%, #a8a8a8 70%, #bdbdbd);
  box-shadow: inset 3px 3px 2px #dcdcdc, inset -3px -3px 2px #7c7c7c;
`;

const Lamp = styled.span`
  width: 18px;
  height: 18px;
  margin-left: 1px;
  border-radius: 50%;
  border: 1px solid #6d7d3c;
  background: radial-gradient(circle at 40% 35%, #8dff5a, #3df000 60%, #2fc400);
  box-shadow: 1px 1px 1px #d8cfae, -1px -1px 1px #5d5236;
`;

const Logging = styled(BlueBox)`
  display: grid;
  grid-template-columns: 361px 1fr;
  margin-top: 11px;
`;

const LogHead = styled.div`
  display: grid;
  grid-template-columns: 135px 1fr;
  height: 37px;
`;

const LogTitles = styled.div`
  display: flex;
  flex-direction: column;
  gap: 3px;
  padding-left: 14px;
`;

const Nested = styled.div`
  display: flex;
  padding-left: 4px;
`;

const LogButton = styled.div`
  padding-top: 11px;
`;

const PathRow = styled.div`
  ${sunken}
  border-width: 3px;
  display: flex;
  width: 362px;
  height: 22px;
  margin-left: 1px;
`;

const DriveButton = styled.button`
  width: 15px;
  background: #ffbf00;
  font-size: 11px;
  font-weight: 700;
`;

const Branch = styled.span`
  display: grid;
  place-items: center;
  width: 9px;
  background: #b8b8b4;
`;

const PathInput = styled.input`
  flex: 1;
  min-width: 0;
  padding-left: 2px;
  font-size: 8px;
  font-weight: 400;
  color: #000;
  background: #fafafa;
`;

const RawLabel = styled.div`
  display: flex;
  align-items: center;
  height: 18px;
  padding-left: 16px;
`;

const LogSwitches = styled.div`
  display: flex;
  flex-direction: column;
  padding-top: 14px;
`;

const Oval = styled.button<{ $on?: boolean }>`
  display: flex;
  align-items: center;
  gap: 3px;
  width: 43px;
  height: 25px;
  margin: ${(p) => (p.$on ? 6 : 14)}px 0 0 5px;
  padding-left: ${(p) => (p.$on ? 4 : 3)}px;
  border-radius: 50%;
  border: 1px solid #444;
  font-size: 12px;
  font-weight: 600;
  background: ${(p) => (p.$on ? "linear-gradient(#7b7b76, #a6a69e 60%, #8b8b84)" : "linear-gradient(#d8d8d4, #bcbcb6 60%, #8b8b84)")};
  box-shadow: 1px 1px 2px #d5caa4, inset 0 1px 2px #eee;
`;

const Actions = styled.div`
  display: flex;
  gap: 140px;
  padding: 8px 0 0 9px;
`;

const Spinner = () => (
  <svg width="12" height="24" viewBox="0 0 12 24">
    <ellipse cx="6" cy="12" rx="5.500" ry="11.500" fill="#c4c4c2" stroke="#85806e" />
    <path d="M1 12h10" stroke="#6d6a60" />
    <path d="M4 9l2-5 2 5M4 15l2 5 2-5z" fill="none" stroke="#555" strokeWidth="1" />
  </svg>
);

const BranchIcon = () => (
  <svg width="7" height="13" viewBox="0 0 7 13">
    <path d="M.5.5h3v4h-3zM3.500 8.500h3v4h-3zM2 5v5h2" fill="#fff" stroke="#000" />
  </svg>
);

function FrontPanel() {
  return (
    <Tan>
      <LeftColumn>
        <ScopeChart />
        <Settings $w={408} $h={138}>
          <BackgroundCell>
            <Inline>
              <SteelButton $w={188} $h={35} $size={15}>Renew background now</SteelButton>
              <Lamp />
            </Inline>
            <ValueRow>
              <Label htmlFor="rays">Rays in background</Label>
              <Inline>
                <Spinner />
                <Field id="rays" $w={30} $h={26} $tone="amber" defaultValue="8" />
              </Inline>
            </ValueRow>
          </BackgroundCell>
          <ThresholdCell>
            <ValueRow>
              <Label htmlFor="snr">Display SNR threshold</Label>
              <Inline>
                <Spinner />
                <Field id="snr" $w={45} $h={26} $tone="amber" defaultValue="1.002" />
              </Inline>
            </ValueRow>
          </ThresholdCell>
          <ScannerCell>
            <Label as="span" $blue>Scanner position</Label>
            <AxisFirst>
              <label htmlFor="az">AZ</label>
              <Field id="az" $w={95} $h={35} $tone="white" $size={17} $weight={400} defaultValue="090.000" />
            </AxisFirst>
            <Axis>
              <label htmlFor="el">EL</label>
              <Field id="el" $w={95} $h={35} $tone="white" $size={17} $weight={400} defaultValue="090.001" />
            </Axis>
          </ScannerCell>
        </Settings>
        <VelocityChart />
        <Logging $w={420} $h={108}>
          <div>
            <LogHead>
              <LogTitles>
                <Label as="span" $blue>Data Logging</Label>
                <Nested><Label htmlFor="proc">Processed Data file</Label></Nested>
              </LogTitles>
              <LogButton><SteelButton $w={134} $h={24} $size={11} $bold>Restart processed file</SteelButton></LogButton>
            </LogHead>
            <PathRow>
              <DriveButton>C</DriveButton>
              <Branch><BranchIcon /></Branch>
              <PathInput id="proc" defaultValue="C:\Lidar\Data\Proc\2023\202308\20230822\Stare_122_20230822_15.hpl" />
            </PathRow>
            <RawLabel><Label htmlFor="raw">RAW Data file</Label></RawLabel>
            <PathRow>
              <DriveButton>C</DriveButton>
              <Branch><BranchIcon /></Branch>
              <PathInput id="raw" defaultValue="" />
            </PathRow>
          </div>
          <LogSwitches>
            <Label as="span" $blue>Logging</Label>
            <Oval $on aria-pressed="true">ON<svg width="13" height="14"><path d="M1 1q8 0 11 6-3 6-11 6z" fill="#44f010" /></svg></Oval>
            <Oval aria-pressed="false">OFF<svg width="13" height="14"><path d="M1 1q8 0 10 6-2 6-10 6z" fill="#1f4a12" /></svg></Oval>
          </LogSwitches>
        </Logging>
        <Actions>
          <SteelButton $w={100} $h={48} $size={15} $line={21} $red>STOP<br />software</SteelButton>
          <SteelButton $w={116} $h={48} $size={15} $line={21}>Change LiDAR<br />Settings</SteelButton>
        </Actions>
      </LeftColumn>
      <RightColumn>
        <ChartHead $h={24}><ChartName>Backscatter</ChartName></ChartHead>
        <ChartRow>
          <HeatChart field={backscatterField} label="Backscatter" />
          <ColourScale id="bs" title="log B (/m/sr)" marks={["-3.0", "-5.5", "-8.0"]} over="#000" under="#000" frame="#e070d8" titleY={74} />
        </ChartRow>
        <ChartHead $h={27}>
          <ChartName>Doppler</ChartName>
          <Average>
            <Label htmlFor="avg">Average number</Label>
            <Field id="avg" $w={28} $h={22} $tone="grey" defaultValue="1" />
            <Between htmlFor="total">of</Between>
            <Field id="total" $w={28} $h={22} $tone="grey" defaultValue="1" />
          </Average>
          <SwitchGroup>
            <Label as="span" id="mode">Backscatter</Label>
            <button aria-labelledby="mode" aria-pressed="false">
              <svg width="25" height="17" viewBox="0 0 25 17">
                <circle cx="18" cy="8" r="7" fill="#b5b3a8" stroke="#666" />
                <rect x="4" y="3" width="18" height="10" rx="4" fill="#2c2f30" />
                <circle cx="6" cy="8" r="5" fill="#c9c9c9" stroke="#777" />
                <circle cx="5" cy="7" r="2" fill="#fff" />
              </svg>
            </button>
          </SwitchGroup>
        </ChartHead>
        <ChartRow>
          <HeatChart field={dopplerField} label="Doppler" cursor />
          <ColourScale id="dp" title="Velocity (m/s)" marks={["4.0", "0.0", "-4.0"]} over="#f010e0" under="#000" frame="#222" titleY={73} />
        </ChartRow>
      </RightColumn>
    </Tan>
  );
}

/* ---------- taskbars ---------- */

const RemoteBar = styled.footer`
  flex: none;
  display: flex;
  align-items: stretch;
  height: 40px;
  border-top: 1px solid #5d6f88;
  box-shadow: inset 0 1px 0 #dfe9f5;
  background: linear-gradient(90deg, #8699b0 0, #90a5be 50px, #a7bedb 60px, #a9c1de 100%);
`;

const RemoteStart = styled.button`
  display: grid;
  place-items: center;
  width: 54px;
  padding-right: 2px;
`;

const RemoteApps = styled.div`
  display: flex;
  gap: 4px;
  flex: 1;
  padding: 1px 0 0 5px;
`;

const RemoteButton = styled.button<{ $stack?: boolean; $active?: boolean }>`
  display: grid;
  place-items: center;
  width: ${(p) => (p.$stack ? 51 : 58)}px;
  margin-right: ${(p) => (p.$stack ? 7 : 0)}px;
  border: 1px solid #5f7590;
  border-radius: 3px;
  background: ${(p) => (p.$active ? "linear-gradient(135deg, #fdfeff, #c9d9ec 60%, #dfe9f5)" : "linear-gradient(135deg, #e1eaf5, #b4c8df 55%, #b9cde3)")};
  box-shadow: inset 0 0 0 1px rgba(255, 255, 255, 0.75)
    ${(p) => (p.$stack ? ", 4px 0 0 -1px #b4c8df, 4px 0 0 0 #6f86a2, 8px 0 0 -1px #b4c8df, 8px 0 0 0 #6f86a2" : "")};
`;

const RemoteTray = styled.div`
  display: flex;
  align-items: center;
  padding-left: 46px;
  background: linear-gradient(90deg, rgba(127, 145, 166, 0), #8093a9 40px);
  color: #fff;
`;

const TrayIcons = styled.div<{ $gap: number }>`
  display: flex;
  align-items: center;
  gap: ${(p) => p.$gap}px;
  padding-right: 6px;
`;

const Clock = styled.time<{ $size: number; $line: number; $pad: number }>`
  padding: 0 ${(p) => p.$pad}px;
  font-size: ${(p) => p.$size}px;
  line-height: ${(p) => p.$line}px;
  text-align: center;
  white-space: nowrap;
  color: #fff;
`;

const ShowDesktop = styled.button<{ $dark?: boolean }>`
  align-self: stretch;
  width: 14px;
  border: 1px solid ${(p) => (p.$dark ? "#7f98c4" : "#aebccb")};
  background: ${(p) => (p.$dark ? "linear-gradient(#6d87ba, #1c3a76 50%, #1f4690)" : "linear-gradient(135deg, #8b98a8, #5f6c7c 50%, #7f8c9c)")};
`;

const Taskbar = styled.footer`
  position: relative;
  flex: none;
  display: flex;
  align-items: center;
  height: 48px;
  border-top: 1px solid #16264c;
  box-shadow: inset 0 1px 0 #8a9ec8;
  background: linear-gradient(90deg, #1c3262 0, #1f3a76 60px, #23438c 110px, #224086 40%, #2c5199 68%, #335ca6 74%, #26509a 84%);
`;

const BarButton = styled.button<{ $w: number; $active?: boolean }>`
  display: grid;
  place-items: center;
  align-self: stretch;
  width: ${(p) => p.$w}px;
  ${(p) =>
    p.$active &&
    css`
      border: 1px solid #eef3fc;
      border-radius: 2px;
      background: linear-gradient(135deg, #e4e9f6, #98a8d4 50%, #7f92c6);
      box-shadow: 4px 0 0 -1px #6a80ba, 4px 0 0 0 #a9b8dc;
    `}
`;

const Tray = styled.div`
  display: flex;
  align-items: center;
  align-self: stretch;
  margin-left: auto;
  padding-left: 42px;
  background: linear-gradient(90deg, rgba(30, 60, 118, 0), #1e3c76 36px, #284a86);
`;

const ChevronCell = styled.span`
  padding-right: 4px;
`;

const Chevron = ({ w }: { w: number }) => (
  <svg width={w} height="6" viewBox="0 0 10 6"><path d="M0 6L5 0l5 6z" fill="#fff" /></svg>
);

export default function App() {
  return (
    <Desktop>
      <GlobalStyle />
      <Rays viewBox="0 0 1920 1080" preserveAspectRatio="none" aria-hidden="true">
        <defs>
          <filter id="soft" x="-20%" y="-50%" width="140%" height="200%"><feGaussianBlur stdDeviation="9" /></filter>
        </defs>
        <g fill="none" stroke="#0a5cd8" filter="url(#soft)">
          <path d="M0 540C90 600 180 680 290 760" strokeWidth="22" opacity=".45" />
          <path d="M0 134C110 140 190 160 280 205" strokeWidth="10" opacity=".3" />
          <path d="M100 210q90 10 180 6" strokeWidth="6" opacity=".3" />
          <path d="M1700 585Q1810 500 1930 425" strokeWidth="18" opacity=".5" />
          <path d="M1720 310Q1820 270 1930 228" strokeWidth="18" opacity=".4" />
          <path d="M1720 775q100-16 200-18" strokeWidth="6" opacity=".4" />
        </g>
      </Rays>
      <IconColumn aria-label="Desktop">
        {SHORTCUTS.map(([name, icon]) => (
          <Shortcutter key={name}>{icon}<span>{name}</span></Shortcutter>
        ))}
      </IconColumn>

      <Window>
        <TitleBar>
          <TitleText><RdpIcon size={18} /><Glow>192.168.0.150 - Remote Desktop Connection</Glow></TitleText>
          <Caption>
            <CaptionButton $w={35} aria-label="Minimize">
              <svg width="18" height="16"><rect x="1" y="11" width="16" height="4" fill="#fff" stroke="#47536b" /></svg>
            </CaptionButton>
            <CaptionButton $w={33} aria-label="Maximize">
              <svg width="18" height="14"><path d="M.5.5h17v13H.5zM5.500 4.500v5h7v-5z" fill="#fff" fillRule="evenodd" stroke="#47536b" /></svg>
            </CaptionButton>
            <CaptionButton $w={58} $close aria-label="Close">
              <svg width="16" height="14"><path d="M1 1h5l2 3 2-3h5l-4 6 4 6h-5l-2-3-2 3H1l4-6z" fill="#fff" stroke="#5d4040" /></svg>
            </CaptionButton>
          </Caption>
        </TitleBar>
        <Screen>
          <InnerTitle>
            <ViIcon />
            <InnerName>StreamLine XR v14-6.vi</InnerName>
            <InnerButtons>
              <InnerButton aria-label="Minimize"><svg width="12" height="9"><rect x=".5" y="4.500" width="10" height="4" fill="#fff" stroke="#47536b" /></svg></InnerButton>
              <InnerButton aria-label="Restore"><svg width="12" height="11"><path d="M4.500.5h7v6h-7zM.5 4.500h6v6h-6zM2.500 6.500h2v2h-2z" fill="#fff" stroke="#47536b" /></svg></InnerButton>
              <InnerButton $faded aria-label="Close"><svg width="12" height="10"><path d="M1 1h3l2 2 2-2h3L8 5l3 4H8L6 7 4 9H1l3-4z" fill="#fff" stroke="#47536b" /></svg></InnerButton>
            </InnerButtons>
          </InnerTitle>
          <Client>
            <Tabs>
              <Tab $w={101}>System setup</Tab>
              <Tab $w={111} $active>Real time data</Tab>
              <Tab $w={115}>Temp/humidity</Tab>
              <Tab $w={88}>Scheduling</Tab>
              <Tab $w={98}>Wind profile</Tab>
            </Tabs>
            <Pane><BlueFrame><FrontPanel /></BlueFrame></Pane>
          </Client>
          <RemoteBar>
            <RemoteStart aria-label="Start"><OrbIcon size={36} id="orbSmall" /></RemoteStart>
            <RemoteApps>
              <RemoteButton $stack aria-label="Notepad"><NotepadIcon /></RemoteButton>
              <RemoteButton aria-label="Control Panel"><ControlIcon /></RemoteButton>
              <RemoteButton aria-label="Sticky Notes"><NotesIcon /></RemoteButton>
              <RemoteButton aria-label="Power"><PowerIcon /></RemoteButton>
              <RemoteButton $active aria-label="StreamLine XR"><XrIcon /></RemoteButton>
              <RemoteButton aria-label="Command Prompt"><ConsoleIcon /></RemoteButton>
              <RemoteButton aria-label="Scan scheduler"><ScanIcon /></RemoteButton>
              <RemoteButton aria-label="Explorer"><FolderIcon w={32} h={32} /></RemoteButton>
            </RemoteApps>
            <RemoteTray>
              <TrayIcons $gap={9}>
                <Chevron w={8} />
                <svg width="17" height="18" viewBox="0 0 18 18"><SpeakerShape /><path d="M11 6q2 3 0 6M13 4q4 5 0 10M15 3q5 6 0 12" fill="none" stroke="#fff" /></svg>
                <svg width="17" height="18" viewBox="0 0 18 18"><FlagShape /></svg>
              </TrayIcons>
              <Clock $size={11} $line={17} $pad={12}>16:00<br />22/08/2023</Clock>
              <ShowDesktop aria-label="Show desktop" />
            </RemoteTray>
          </RemoteBar>
        </Screen>
      </Window>

      <Taskbar>
        <BarButton $w={66} aria-label="Start"><OrbIcon size={44} id="orbLarge" /></BarButton>
        <BarButton $w={76} aria-label="Internet Explorer"><IeIcon /></BarButton>
        <BarButton $w={66} aria-label="Explorer"><FolderIcon /></BarButton>
        <BarButton $w={68} aria-label="Media Player"><PlayerIcon /></BarButton>
        <BarButton $w={76} aria-label="Chrome"><ChromeIcon size={40} /></BarButton>
        <BarButton $w={62} $active aria-label="Remote Desktop"><RdpIcon /></BarButton>
        <Tray>
          <TrayIcons $gap={12}>
            <ChevronCell><Chevron w={10} /></ChevronCell>
            <svg width="18" height="20" viewBox="0 0 18 20"><FlagShape /><circle cx="13" cy="13" r="5" fill="#e02020" /><path d="M11 11l4 4M15 11l-4 4" stroke="#fff" strokeWidth="1.500" /></svg>
            <svg width="19" height="20" viewBox="0 0 19 20">
              <path d="M0 2h3V0h4v2h3v17H0z" fill="#fff" />
              <path d="M1.500 3.500h7v14h-7z" fill="#e6ecf8" stroke="#5a6a8c" strokeWidth=".8" />
              <path d="M12 2h1.500v3h2.500V2h1.500v3H19v4l-2 2v8h-3v-8l-2-2V5z" fill="#fff" />
            </svg>
            <svg width="19" height="20" viewBox="0 0 19 20"><path d="M6 4h12v11H7" fill="#2b3f66" stroke="#fff" strokeWidth="1.500" /><path d="M.5.5h5v7h-2V16H9v2H2V7.500H.5z" fill="#fff" stroke="#334" strokeWidth=".6" /><path d="M9 19l5-9 5 9z" fill="#f8d020" stroke="#7a6200" strokeWidth=".6" /><path d="M14 13v3M14 17v1" stroke="#000" /></svg>
            <svg width="20" height="20" viewBox="0 0 20 20"><SpeakerShape /><circle cx="14" cy="13" r="5" fill="#e02020" stroke="#fff" strokeWidth=".6" /><circle cx="14" cy="13" r="3" fill="none" stroke="#fff" strokeWidth="1.300" /><path d="M12 11l4 4" stroke="#fff" strokeWidth="1.300" /></svg>
          </TrayIcons>
          <Clock $size={14} $line={22} $pad={14}>16:00<br />22/08/2023</Clock>
          <ShowDesktop $dark aria-label="Show desktop" />
        </Tray>
      </Taskbar>
    </Desktop>
  );
}
